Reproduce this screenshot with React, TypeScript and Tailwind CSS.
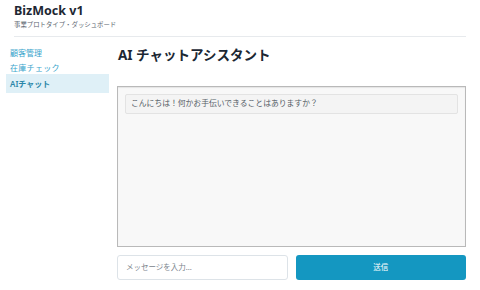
export default function App() {
  const font = { fontFamily: '"Noto Sans", "Noto Sans CJK JP", sans-serif' };
  return (
    <div className="w-[480px] h-[290px] bg-white overflow-hidden text-[#1b2a38]" style={font}>
      <div className="px-[14px] pt-[2px]">
        <div className="text-[12.5px] font-bold leading-[18px] text-[#1d2733]">BizMock v1</div>
        <div className="text-[6.4px] leading-[10px] text-[#5c6670]">事業プロトタイプ・ダッシュボード</div>
        <div className="mt-[6px] h-px bg-[#e7eaed]" />
      </div>
      <div className="flex pl-[6px] pr-[14px] pt-[8px] gap-[8px]">
        <div className="w-[103px] shrink-0 flex flex-col text-[8px]">
          <div className="h-[15px] leading-[15px] px-[4px] text-[#3aa5cc]">顧客管理</div>
          <div className="h-[15px] leading-[15px] px-[4px] text-[#3aa5cc] tracking-[0.3px]">在庫チェック</div>
          <div className="h-[19px] leading-[19px] px-[4px] -mt-[1px] bg-[#dff0f7] text-[#2a86a8] font-semibold">AIチャット</div>
        </div>
        <div className="flex-1 min-w-0 flex flex-col">
          <div className="text-[13.5px] font-bold leading-[18px] mt-[1px] pl-[1px] text-[#1b2733]">AI チャットアシスタント</div>
          <div className="mt-[22px] h-[161px] border border-[#b9b9b9] bg-[#f8f8f8] p-[7px] shadow-[inset_0_1px_1px_rgba(0,0,0,0.08)]">
            <div className="h-[20px] border border-[#e3e3e3] rounded-[2px] bg-[#f4f4f4] px-[5px] flex items-center text-[7.8px] text-[#555d66]">
              こんにちは！何かお手伝いできることはありますか？
            </div>
          </div>
          <div className="mt-[8px] grid grid-cols-2 gap-[8px]">
            <div className="h-[25px] border border-[#dde3e8] rounded-[3px] bg-white px-[8px] flex items-center text-[7.5px] text-[#7a838c]">
              メッセージを入力...
            </div>
            <div className="h-[25px] rounded-[3px] bg-[#1497c1] flex items-center justify-center text-[7.5px] text-white">
              送信
            </div>
          </div>
        </div>
      </div>
    </div>
  );
}
